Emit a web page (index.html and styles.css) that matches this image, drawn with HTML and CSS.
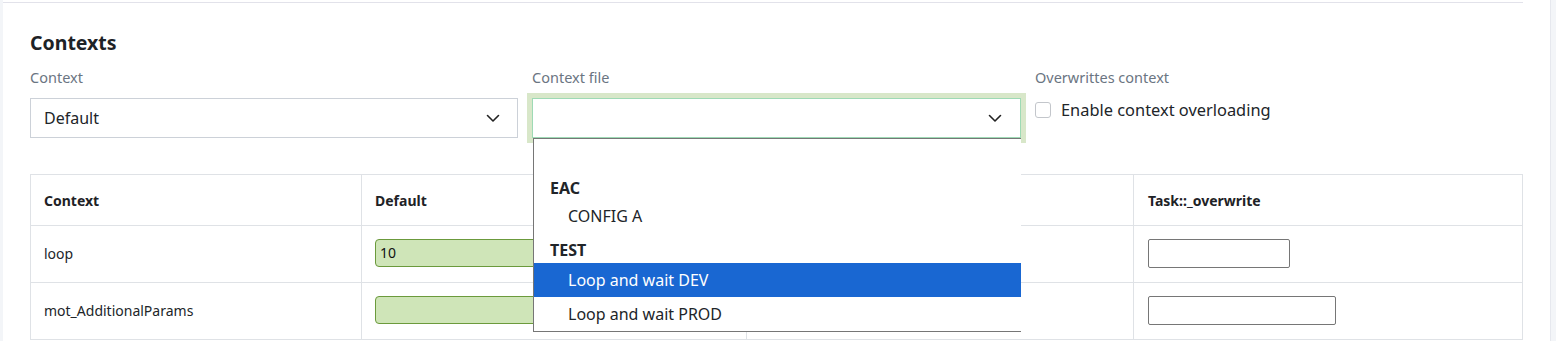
FILE: index.html
```html
<!DOCTYPE html>
<html>
<head>
<meta charset="utf-8">
<link rel="stylesheet" href="styles.css">
</head>
<body>
<div class="page">
  <div class="card">
    <h2 class="title">Contexts</h2>
    <div class="fields">
      <div class="field">
        <div class="label">Context</div>
        <div class="select">
          <span class="select-text">Default</span>
          <svg class="chev" width="14" height="9" viewBox="0 0 14 9"><path d="M1.5 1.5 L7 7 L12.5 1.5" fill="none" stroke="#222" stroke-width="1.6" stroke-linecap="round" stroke-linejoin="round"/></svg>
        </div>
      </div>
      <div class="field">
        <div class="label">Context file</div>
        <div class="select-wrap">
          <div class="select focus">
            <span class="select-text"></span>
            <svg class="chev" width="14" height="9" viewBox="0 0 14 9"><path d="M1.5 1.5 L7 7 L12.5 1.5" fill="none" stroke="#222" stroke-width="1.6" stroke-linecap="round" stroke-linejoin="round"/></svg>
          </div>
          <div class="menu">
            <div class="opt empty"></div>
            <div class="group g1">EAC</div>
            <div class="opt">CONFIG A</div>
            <div class="group g2">TEST</div>
            <div class="opt active">Loop and wait DEV</div>
            <div class="opt">Loop and wait PROD</div>
          </div>
        </div>
      </div>
      <div class="field">
        <div class="label">Overwrittes context</div>
        <label class="check">
          <span class="box"></span>
          <span>Enable context overloading</span>
        </label>
      </div>
    </div>
    <table class="grid">
      <colgroup>
        <col class="c1"><col class="c2"><col class="c3"><col class="c4">
      </colgroup>
      <thead>
        <tr><th>Context</th><th>Default</th><th></th><th class="last">Task::_overwrite</th></tr>
      </thead>
      <tbody>
        <tr>
          <td>loop</td>
          <td><div class="gin">10</div></td>
          <td></td>
          <td class="last"><div class="tin w1"></div></td>
        </tr>
        <tr>
          <td>mot_AdditionalParams</td>
          <td><div class="gin"></div></td>
          <td></td>
          <td class="last"><div class="tin w2"></div></td>
        </tr>
      </tbody>
    </table>
  </div>
</div>
</body>
</html>
```
FILE: styles.css
```css
* { box-sizing: border-box; }
html, body { margin: 0; padding: 0; }
body {
  background: #f3f5f8;
  font-family: "Noto Sans", "Open Sans", sans-serif;
  color: #212529;
  height: 341px;
  overflow: hidden;
}
.page {
  margin-left: 3px;
  width: 1548px;
  height: 341px;
  background: #fff;
  border-right: 1px solid #e6e8ee;
  padding-top: 2px;
}
.card {
  border-top: 1px solid #e2e2ea;
  padding: 29px 0 0 27px;
  width: 1520px;
}
.title {
  margin: 0;
  font-size: 19.5px;
  font-weight: 700;
  line-height: 22px;
  color: #1e2226;
}
.fields {
  display: grid;
  grid-template-columns: 488px 489px 488px;
  gap: 14px;
  margin-top: 13px;
}
.label {
  font-size: 14.5px;
  line-height: 20px;
  color: #6b7582;
  margin-bottom: 11px;
}
.select {
  height: 40px;
  border: 1px solid #ccd1d8;
  display: flex;
  align-items: center;
  justify-content: space-between;
  padding: 0 17px 0 13px;
  font-size: 16px;
  background: #fff;
}
.select.focus {
  border-color: #9edab5;
  box-shadow: 0 0 0 5px #d8e7c9;
  padding-right: 18px;
}
.select-wrap { position: relative; }
.menu {
  position: absolute;
  left: 1px;
  top: 40px;
  width: 488px;
  background: #fff;
  border: 1px solid #767676;
  border-right: none;
  z-index: 5;
  font-size: 16px;
}
.opt {
  height: 30px;
  line-height: 30px;
  padding-left: 34px;
  color: #212529;
}
.opt.empty { height: 33px; }
.group {
  font-weight: 700;
  padding-left: 16px;
  line-height: 24px;
  color: #212529;
}
.group.g1 { height: 29px; padding-top: 4px; }
.group.g2 { height: 32px; padding-top: 7px; }
.opt.active {
  background: #1967d2;
  color: #fff;
  height: 34px;
  line-height: 34px;
}
.opt.active + .opt {
  height: 34px;
  line-height: 34px;
}
.check {
  display: flex;
  align-items: center;
  gap: 10px;
  font-size: 16.4px;
  line-height: 24px;
  margin-top: 2px;
  color: #212529;
}
.box {
  width: 16px;
  height: 16px;
  border: 1px solid #c3c6cb;
  border-radius: 3px;
  background: #fff;
}
.grid {
  margin-top: 36px;
  border-collapse: collapse;
  width: 1492px;
  table-layout: fixed;
  font-size: 14px;
}
.c1 { width: 331px; }
.c2 { width: 385px; }
.c3 { width: 387px; }
.c4 { width: 389px; }
.grid th, .grid td {
  border: 1px solid #dfe2e6;
  padding: 0 13px;
  text-align: left;
  vertical-align: middle;
}
.grid .last { padding-left: 14px; }
.grid th {
  height: 51px;
  font-weight: 700;
  color: #1e2226;
}
.grid td { height: 57px; padding-bottom: 2px; }
.gin {
  width: 330px;
  height: 28px;
  background: #cfe5b8;
  border: 1px solid #6b9a3c;
  border-radius: 4px;
  padding-left: 4px;
  line-height: 26px;
  font-size: 14px;
  color: #111;
}
.tin {
  height: 29px;
  border: 1px solid #767676;
  border-radius: 2px;
  background: #fff;
}
.tin.w1 { width: 142px; }
.tin.w2 { width: 188px; }
```
